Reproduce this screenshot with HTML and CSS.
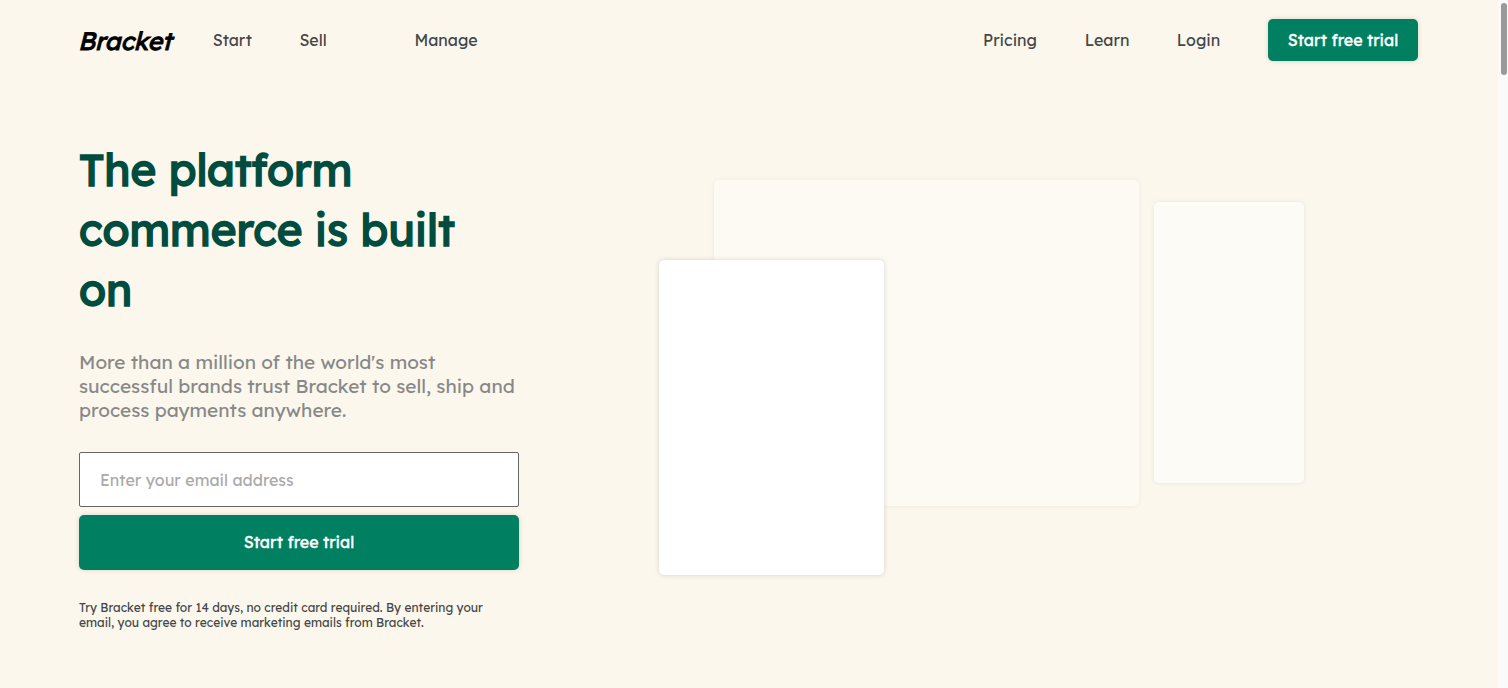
FILE: index.html
```
<!DOCTYPE html>
<html lang="en">
<head>
<meta charset="utf-8">
<title>Bracket</title>
<link rel="stylesheet" href="styles.css">
</head>
<body>
<div class="page">
  <header class="header">
    <a class="logo">Bracket</a>
    <nav class="nav nav-main">
      <a class="start">Start</a>
      <a class="sell">Sell</a>
      <a class="manage">Manage</a>
    </nav>
    <nav class="nav nav-side">
      <a class="pricing">Pricing</a>
      <a class="learn">Learn</a>
      <a class="login">Login</a>
    </nav>
    <button class="button button-small">Start free trial</button>
  </header>
  <main class="hero">
    <section class="intro">
      <h1 class="title">The platform<br>commerce is built<br>on</h1>
      <p class="lead">More than a million of the world's most<br>successful brands trust Bracket to sell, ship and<br>process payments anywhere.</p>
      <input class="field" type="email" placeholder="Enter your email address">
      <button class="button button-large">Start free trial</button>
      <p class="terms">Try Bracket free for 14 days, no credit card required. By entering your<br>email, you agree to receive marketing emails from Bracket.</p>
    </section>
    <section class="art">
      <div class="card card-wide"></div>
      <div class="card card-side"></div>
      <div class="card card-front"></div>
    </section>
  </main>
</div>
<div class="rail"><div class="thumb"></div></div>
</body>
</html>
```
FILE: styles.css
```
* { box-sizing: border-box; }
body { margin: 0; display: flex; height: 688px; overflow: hidden; background: #fbf7ec; font-family: "Lexend", Inter, sans-serif; color: #444648; }
.page { flex: 1; }
.header { display: flex; align-items: center; height: 80px; padding: 0 80px 0 79px; }
.logo { width: 94.7px; margin-left: -1px; margin-right: 40px; padding-top: 1px; font-size: 25px; line-height: 31px; font-weight: 400; font-style: italic; color: #000; -webkit-text-stroke: 0.85px #000; white-space: nowrap; }
.nav { display: flex; gap: 48px; font-size: 16px; line-height: 20px; white-space: nowrap; }
.start { width: 38.7px; }
.sell { width: 67px; }
.nav-side { margin-left: auto; margin-right: 48px; }
.pricing { width: 53.7px; }
.learn { width: 44.1px; }
.login { width: 43.2px; }
.button { padding: 0; border: 0; border-radius: 5px; background: #008060; color: #fff; font: 400 16px/20px "Lexend", Inter, sans-serif; -webkit-text-stroke: 0.35px #fff; box-shadow: 0 0 5px rgba(0, 0, 0, .15); }
.button-small { width: 150px; height: 42px; }
.hero { display: flex; padding: 60px 0 0 79px; }
.intro { width: 440px; }
.title { margin: 0; font-size: 44px; line-height: 60px; font-weight: 400; color: #004c3f; -webkit-text-stroke: 1.5px #004c3f; white-space: nowrap; }
.lead { margin: 30px 0; font-size: 19px; line-height: 24px; color: #888; white-space: nowrap; }
.field { display: block; width: 100%; height: 55px; padding: 0 20px; border: 1px solid #666; border-radius: 2px; background: #fff; font: 16px/20px "Lexend", Inter, sans-serif; }
.field::placeholder { color: #aaa; }
.button-large { display: block; width: 100%; height: 55px; margin-top: 8px; padding-bottom: 2px; }
.terms { margin: 30px 0 0; font-size: 12px; line-height: 15px; white-space: nowrap; }
.art { position: relative; width: 646px; height: 396px; margin: 40px 0 0 140px; }
.card { position: absolute; border-radius: 5px; background: #fff; box-shadow: 0 0 5px rgba(0, 0, 0, .15); }
.card-wide { left: 55px; top: 0; width: 425px; height: 326px; background: #fdfaf3; box-shadow: 0 0 5px rgba(0, 0, 0, .06); }
.card-side { left: 495px; top: 22px; width: 150px; height: 281px; background: #fcfbf6; box-shadow: 0 0 5px rgba(0, 0, 0, .08); }
.card-front { left: 0; top: 80px; width: 225px; height: 315px; }
.rail { width: 10px; background: #fafafa; padding: 3px 1px 0 3px; }
.thumb { height: 72px; border-radius: 3px; background: #999; }
```
